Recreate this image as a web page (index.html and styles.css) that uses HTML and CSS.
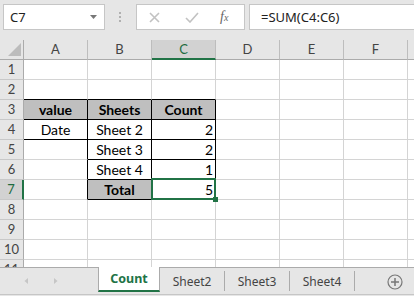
FILE: index.html
```html
<!DOCTYPE html>
<html lang="en">
<head>
  <meta charset="UTF-8" />
  <title>Count</title>
  <link rel="stylesheet" href="styles.css">
</head>
<body>
  <div class="toolbar">
    <div class="namebox">
      <span>C7</span>
      <svg width="8" height="5" viewBox="0 0 8 5"><polygon points="0,0 7,0 3.5,4" fill="#777"/></svg>
    </div>
    <div class="grip">
      <svg width="3" height="11" viewBox="0 0 3 11"><rect x="0" y="0" width="2" height="2" fill="#b0b0b0"/><rect x="0" y="4" width="2" height="2" fill="#b0b0b0"/><rect x="0" y="8" width="2" height="2" fill="#b0b0b0"/></svg>
    </div>
    <div class="fxbox">
      <svg class="x" width="11" height="11" viewBox="0 0 11 11"><path d="M1 1 L10 10 M10 1 L1 10" stroke="#c2c2c2" stroke-width="1.6" fill="none"/></svg>
      <svg class="ok" width="14" height="11" viewBox="0 0 14 11"><path d="M1 6 L5 10 L13 1" stroke="#c2c2c2" stroke-width="1.6" fill="none"/></svg>
      <span class="fx">f<sub>x</sub></span>
    </div>
    <div class="formula">=SUM(C4:C6)</div>
  </div>

  <div class="sheet">
    <div class="c corner"><svg width="14" height="14" viewBox="0 0 14 14"><polygon points="0,13 13,0 13,13" fill="#bcbcbc"/></svg></div>
    <div class="c ch">A</div><div class="c ch">B</div><div class="c ch on">C</div><div class="c ch">D</div><div class="c ch">E</div><div class="c ch">F</div><div class="c ch"></div>

    <div class="c rh">1</div><div class="c"></div><div class="c"></div><div class="c"></div><div class="c"></div><div class="c"></div><div class="c"></div><div class="c"></div>

    <div class="c rh">2</div><div class="c bb"></div><div class="c bb"></div><div class="c bb"></div><div class="c"></div><div class="c"></div><div class="c"></div><div class="c"></div>

    <div class="c rh">3</div>
    <div class="c hdr bb br">value</div>
    <div class="c hdr bb br">Sheets</div>
    <div class="c hdr bb br">Count</div>
    <div class="c"></div><div class="c"></div><div class="c"></div><div class="c"></div>

    <div class="c rh">4</div>
    <div class="c ctr bb br">Date</div>
    <div class="c ctr bb br">Sheet 2</div>
    <div class="c num bb br">2</div>
    <div class="c"></div><div class="c"></div><div class="c"></div><div class="c"></div>

    <div class="c rh">5</div>
    <div class="c br"></div>
    <div class="c ctr bb br">Sheet 3</div>
    <div class="c num bb br">2</div>
    <div class="c"></div><div class="c"></div><div class="c"></div><div class="c"></div>

    <div class="c rh">6</div>
    <div class="c br"></div>
    <div class="c ctr bb br">Sheet 4</div>
    <div class="c num bb br">1</div>
    <div class="c"></div><div class="c"></div><div class="c"></div><div class="c"></div>

    <div class="c rh on">7</div>
    <div class="c br"></div>
    <div class="c hdr bb br">Total</div>
    <div class="c num cur">5</div>
    <div class="c"></div><div class="c"></div><div class="c"></div><div class="c"></div>

    <div class="c rh">8</div><div class="c"></div><div class="c"></div><div class="c"></div><div class="c"></div><div class="c"></div><div class="c"></div><div class="c"></div>
    <div class="c rh">9</div><div class="c"></div><div class="c"></div><div class="c"></div><div class="c"></div><div class="c"></div><div class="c"></div><div class="c"></div>
    <div class="c rh">10</div><div class="c"></div><div class="c"></div><div class="c"></div><div class="c"></div><div class="c"></div><div class="c"></div><div class="c"></div>
    <div class="c rh">11</div><div class="c"></div><div class="c"></div><div class="c"></div><div class="c"></div><div class="c"></div><div class="c"></div><div class="c"></div>
  </div>

  <div class="tabs">
    <div class="nav">
      <svg width="98" height="26" viewBox="0 0 98 26"><polygon points="28,10 24.5,13 28,16" fill="#c6c6c6"/><polygon points="54,10 57.5,13 54,16" fill="#c6c6c6"/></svg>
    </div>
    <div class="tab active">Count</div>
    <div class="tab">Sheet2</div>
    <div class="tab">Sheet3</div>
    <div class="tab">Sheet4</div>
    <div class="add">
      <svg width="16" height="16" viewBox="0 0 16 16"><circle cx="8" cy="8" r="7" stroke="#777" stroke-width="1.2" fill="none"/><path d="M8 4 V12 M4 8 H12" stroke="#777" stroke-width="1.5"/></svg>
    </div>
  </div>
</body>
</html>
```

FILE: styles.css
```css
* {
  box-sizing: border-box;
}
body {
  margin: 0;
  width: 414px;
  height: 296px;
  overflow: hidden;
  background-color: #e6e6e6;
  font-family: "Noto Sans", sans-serif;
  color: #222;
}
.toolbar {
  display: flex;
  align-items: flex-start;
  height: 40px;
  padding: 4px 0 0 3px;
}
.namebox {
  width: 102px;
  height: 26px;
  background: #fff;
  border: 1px solid #c6c6c6;
  display: flex;
  align-items: center;
  justify-content: space-between;
  padding: 0 6px;
  font-size: 13px;
}
.grip {
  width: 31px;
  height: 26px;
  display: flex;
  align-items: center;
  justify-content: center;
}
.fxbox {
  width: 109px;
  height: 26px;
  background: #fff;
  border: 1px solid #c6c6c6;
  display: flex;
  align-items: center;
}
.fxbox .x {
  margin-left: 12px;
}
.fxbox .ok {
  margin-left: 25px;
}
.fx {
  margin-left: 21px;
  font-family: "Liberation Serif", serif;
  font-style: italic;
  font-size: 14px;
  color: #666;
}
.fx sub {
  font-size: 10px;
  vertical-align: 0;
}
.formula {
  flex: 1;
  height: 26px;
  margin-left: 4px;
  margin-right: -2px;
  background: #fff;
  border: 1px solid #c6c6c6;
  padding-left: 11px;
  font-size: 13px;
  line-height: 24px;
}

.sheet {
  display: grid;
  grid-template-columns: 24px repeat(7, 64px);
  grid-auto-rows: 20px;
  height: 227px;
  overflow: hidden;
  background: #fff;
  font-family: Lato, sans-serif;
  font-size: 14px;
  color: #000;
}
.c {
  display: flex;
  align-items: flex-end;
  padding: 0 2px;
  line-height: 19px;
  white-space: nowrap;
  border-right: 1px solid #d4d4d4;
  border-bottom: 1px solid #d4d4d4;
}
.corner,
.ch,
.rh {
  background: #e6e6e6;
  color: #444;
  font-size: 13px;
  align-items: center;
  justify-content: center;
}
.corner {
  position: relative;
  border-right: 1px solid #ababab;
  border-bottom: 1px solid #ababab;
}
.corner svg {
  position: absolute;
  left: 8px;
  top: 3px;
}
.ch {
  border-right-color: #bdbdbd;
  border-bottom-color: #ababab;
}
.ch.on {
  background: #d2d2d2;
  border-bottom: 2px solid #217346;
  color: #1e6b40;
}
.rh {
  border-right-color: #ababab;
  border-bottom-color: #c8c8c8;
}
.rh.on {
  background: #d2d2d2;
  border-right: 2px solid #217346;
  color: #1e6b40;
}
.hdr {
  background: #bfbfbf;
  font-weight: bold;
  justify-content: center;
}
.ctr {
  justify-content: center;
}
.num {
  justify-content: flex-end;
}
.bb {
  border-bottom-color: #000;
}
.br {
  border-right-color: #000;
}
.cur {
  position: relative;
}
.cur::before {
  content: "";
  position: absolute;
  left: -1px;
  right: -1px;
  top: -2px;
  bottom: -1px;
  border: 2px solid #217346;
}
.cur::after {
  content: "";
  position: absolute;
  right: -3px;
  bottom: -3px;
  width: 5px;
  height: 5px;
  background: #217346;
}

.tabs {
  display: flex;
  align-items: flex-start;
  height: 28px;
  border-top: 1px solid #ababab;
  border-bottom: 1px solid #c6c6c6;
  font-size: 12px;
  color: #444;
}
.nav {
  width: 98px;
  height: 26px;
}
.tab {
  width: 65px;
  height: 20px;
  margin-top: 3px;
  border-right: 1px solid #ababab;
  display: flex;
  align-items: center;
  justify-content: center;
}
.tab.active {
  width: 62px;
  height: 25px;
  margin-top: -1px;
  background: #fff;
  border-left: 1px solid #ababab;
  border-bottom: 2px solid #217346;
  color: #217346;
  font-size: 12.5px;
  font-weight: bold;
}
.add {
  margin-left: auto;
  margin-right: 11px;
  margin-top: 6px;
  height: 16px;
}
```
